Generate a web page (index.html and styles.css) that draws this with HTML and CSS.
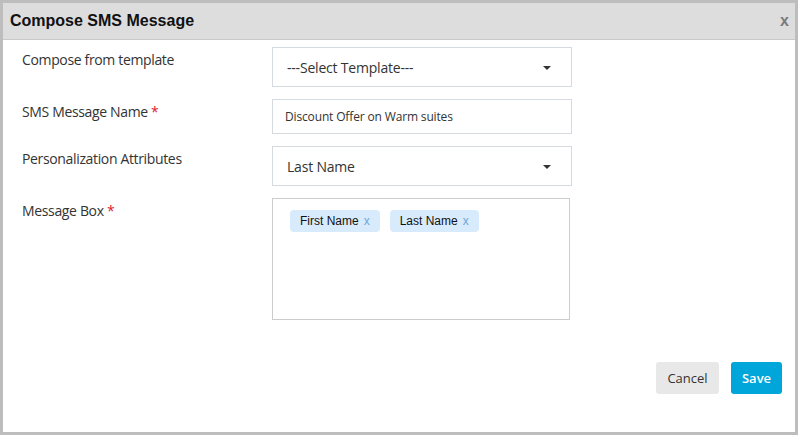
FILE: index.html
```html
<!DOCTYPE html>
<html>
<head>
<meta charset="utf-8">
<link rel="stylesheet" href="styles.css">
</head>
<body>
<div class="modal">
  <div class="modal-header">
    <span class="title">Compose SMS Message</span>
    <span class="close">x</span>
  </div>
  <div class="modal-body">
    <div class="row">
      <div class="label">Compose from template</div>
      <div class="select"><span>---Select Template---</span><span class="caret"></span></div>
    </div>
    <div class="row">
      <div class="label">SMS Message Name <span class="req">*</span></div>
      <div class="input">Discount Offer on Warm suites</div>
    </div>
    <div class="row">
      <div class="label">Personalization Attributes</div>
      <div class="select"><span>Last Name</span><span class="caret"></span></div>
    </div>
    <div class="row">
      <div class="label">Message Box <span class="req">*</span></div>
      <div class="textarea">
        <span class="chip">First Name <span class="chip-x">x</span></span>
        <span class="chip">Last Name <span class="chip-x">x</span></span>
      </div>
    </div>
  </div>
  <div class="modal-footer">
    <button class="btn btn-cancel">Cancel</button>
    <button class="btn btn-save">Save</button>
  </div>
</div>
</body>
</html>
```
FILE: styles.css
```css
* { box-sizing: border-box; }
html, body { margin: 0; padding: 0; }
body {
  background: #bdbdbd;
  padding: 3px;
  width: 798px;
  height: 435px;
  font-family: "Open Sans", "Liberation Sans", sans-serif;
  color: #333;
}
.modal {
  background: #fff;
  width: 792px;
  height: 429px;
  display: flex;
  flex-direction: column;
}
.modal-header {
  height: 37px;
  background: #dddddd;
  border-bottom: 1px solid #c9c9c9;
  display: flex;
  align-items: center;
  justify-content: space-between;
  padding: 0 6px 0 7px;
}
.title {
  font-family: "Liberation Sans", Arial, sans-serif;
  font-weight: bold;
  font-size: 16px;
  color: #111;
}
.close {
  font-family: "Liberation Sans", Arial, sans-serif;
  font-weight: bold;
  font-size: 16px;
  color: #7a7a7a;
  margin-top: 0;
}
.modal-body {
  padding: 7px 0 0 19px;
}
.row {
  display: flex;
  align-items: flex-start;
  margin-bottom: 12px;
}
.label {
  width: 250px;
  padding-top: 3px;
  font-size: 14px;
  line-height: 20px;
  letter-spacing: -0.35px;
  color: #333;
}
.req { color: #e0202a; }
.select {
  width: 300px;
  height: 40px;
  border: 1px solid #d5dae0;
  display: flex;
  align-items: center;
  justify-content: space-between;
  padding: 0 20px 0 14px;
  font-size: 14px;
  letter-spacing: -0.2px;
  color: #333;
}
.caret {
  width: 0;
  height: 0;
  border-left: 4px solid transparent;
  border-right: 4px solid transparent;
  border-top: 4px solid #333;
  margin-top: 2px;
}
.input {
  width: 300px;
  height: 35px;
  border: 1px solid #d5dae0;
  display: flex;
  align-items: center;
  padding: 0 12px;
  font-size: 12px;
  letter-spacing: -0.15px;
  color: #333;
}
.textarea {
  width: 298px;
  height: 122px;
  border: 1px solid #cccccc;
  padding: 11px 17px;
  display: flex;
  align-items: flex-start;
  gap: 10px;
}
.chip {
  display: inline-flex;
  align-items: center;
  height: 22px;
  padding: 0 10px;
  background: #d8ebfc;
  border-radius: 4px;
  font-family: "Liberation Sans", Arial, sans-serif;
  font-size: 12px;
  color: #111;
}
.chip-x {
  color: #6fa8d6;
  margin-left: 5px;
}
.modal-footer {
  display: flex;
  justify-content: flex-end;
  gap: 12px;
  padding-right: 13px;
  margin-top: 30px;
}
.btn {
  height: 32px;
  border: none;
  border-radius: 3px;
  font-family: "Open Sans", "Liberation Sans", sans-serif;
  font-size: 13px;
  padding: 0;
  text-align: center;
}
.btn-cancel {
  width: 63px;
  background: #e8e8e8;
  color: #333;
}
.btn-save {
  width: 51px;
  background: #00a5d9;
  color: #fff;
  font-weight: 600;
}
```
